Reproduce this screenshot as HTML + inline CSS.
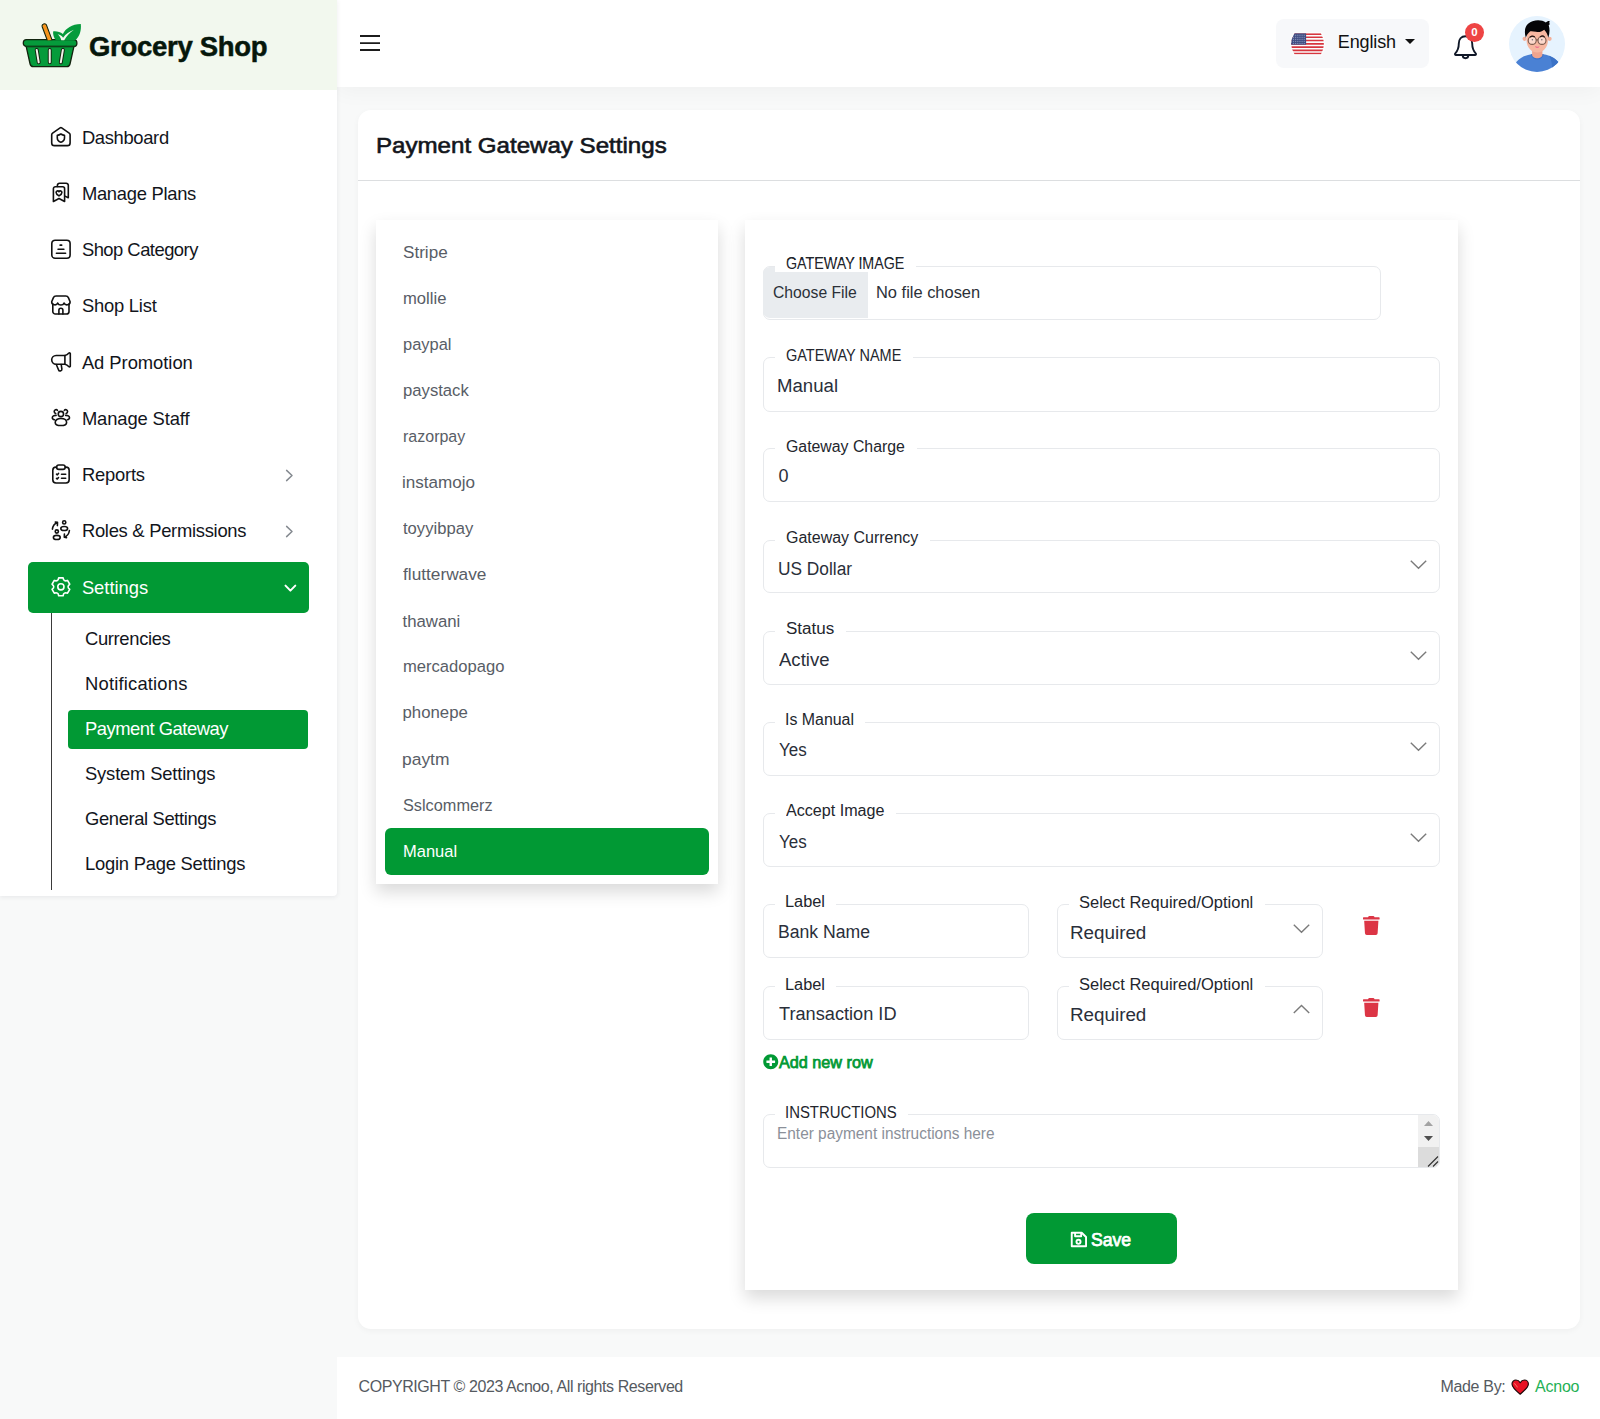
<!DOCTYPE html>
<html lang="en"><head><meta charset="utf-8"><title>Payment Gateway Settings</title>
<style>
*{box-sizing:border-box;margin:0;padding:0}
html,body{width:1600px;height:1419px;overflow:hidden}
body{position:relative;background:#f8f9f9;font-family:"Liberation Sans",sans-serif;color:#111}
.t{position:absolute;white-space:pre;font-family:"Liberation Sans",sans-serif}
.abs{position:absolute}
svg{position:absolute;overflow:visible}
.field{position:absolute;border:1px solid #e7e9ec;border-radius:7px;background:#fff}
.lbl{position:absolute;background:#fff;height:14px}
.shadow{box-shadow:0 8px 16px rgba(0,0,0,.15)}
</style></head><body>
<header class="abs" style="left:337px;top:0;width:1263px;height:87px;background:#fff;box-shadow:0 3px 22px rgba(0,0,0,.045)"></header>
<aside class="abs" style="left:0;top:0;width:337px;height:896px;background:#fff;box-shadow:0 1px 5px rgba(40,40,70,.09);border-radius:0 0 4px 0"></aside>
<div class="abs" style="left:0;top:0;width:337px;height:90px;background:#f2f8ee"></div>
<svg style="left:21px;top:21px" width="62" height="48" viewBox="0 0 62 48">
<defs><clipPath id="hc"><rect x="0" y="0" width="62" height="19.300"/></clipPath></defs>
<path d="M5.100 25.200 H53 L49 43 A3.300 3.300 0 0 1 45.800 45.600 H12.300 A3.300 3.300 0 0 1 9.100 43 Z" fill="#059b3b" stroke="#12240e" stroke-width="1.300" stroke-linejoin="round"/>
<rect x="2.300" y="18.600" width="53.600" height="6.900" rx="3.300" fill="#059b3b" stroke="#12240e" stroke-width="1.300"/>
<path d="M4.500 25.300 H53.600" stroke="#0a5a22" stroke-width="1.100" opacity=".75"/>
<g clip-path="url(#hc)"><path d="M21.200 5.700 L26.800 20.700 L31.100 19.100 L25.500 4.100 A2.300 2.300 0 0 0 21.200 5.700 Z" fill="#f7941d" stroke="#12240e" stroke-width="1.100" stroke-linejoin="round"/></g>
<path d="M34.800 19.300 C32.800 16.300 31.900 13.300 32.100 10.400 C35.600 10 39.200 10.900 41.900 13.100 C44.600 7.500 51 3.300 59.800 3.100 C60.500 9.600 58.600 15.700 54.300 19.300 Z" fill="#059b3b"/>
<path d="M36.700 13.300 C39.300 13.800 41 15 42.100 16.700 C44.800 13 48.300 10.400 52.900 8.800 C48.800 11.600 45.600 15 43.200 19.300 L40.300 19.300 C39.800 16.800 38.600 14.900 36.700 13.300 Z" fill="#f3f9ef"/>
<path d="M15.700 28.900 L17.700 41.300 M28.750 28.900 V41.300 M41.900 28.900 L39.800 41.300" stroke="#12240e" stroke-width="3.900" stroke-linecap="round"/>
<path d="M15.700 28.900 L17.700 41.300 M28.750 28.900 V41.300 M41.900 28.900 L39.800 41.300" stroke="#f4f1ea" stroke-width="2" stroke-linecap="round"/>
</svg>
<span class="t" style="left:88.95px;top:29px;font-size:27.5px;line-height:35px;color:#06170b;font-weight:700;letter-spacing:-0.287px;-webkit-text-stroke:0.5px #06170b;">Grocery Shop</span>
<svg style="left:49px;top:125px" width="24" height="24" viewBox="0 0 24 24" fill="none" stroke="#111" stroke-width="1.6" stroke-linecap="round" stroke-linejoin="round"><path d="M12.7 2.85 L20.2 8.1 A2.1 2.1 0 0 1 21.1 9.8 V17.9 A2.7 2.7 0 0 1 18.4 20.6 H5.4 A2.7 2.7 0 0 1 2.7 17.9 V9.8 A2.1 2.1 0 0 1 3.6 8.1 L11.1 2.85 A1.4 1.4 0 0 1 12.7 2.85 Z"/><path d="M11.9 9 C13.1 9.9 14.2 10.3 15.5 10.4 V12.9 C15.5 15.2 13.9 16.5 11.9 17.2 C9.9 16.5 8.3 15.2 8.3 12.9 V10.4 C9.6 10.3 10.7 9.9 11.9 9 Z"/></svg>
<span class="t" style="left:81.90px;top:125px;font-size:18.4px;line-height:25px;color:#12151c;letter-spacing:-0.343px;">Dashboard</span>
<svg style="left:49px;top:181px" width="24" height="24" viewBox="0 0 24 24" fill="none" stroke="#111" stroke-width="1.6" stroke-linecap="round" stroke-linejoin="round"><path d="M8.4 5.4 V4.3 A2.1 2.1 0 0 1 10.5 2.2 H17.2 A2.1 2.1 0 0 1 19.3 4.300 V16.8 L15.9 15.100"/><path d="M4.4 7.7 A2 2 0 0 1 6.4 5.7 H13.6 A2 2 0 0 1 15.600 7.700 V20.5 L10 17.5 L4.4 20.5 Z"/><path d="M10 14.900 C8.3 13.800 7.100 12.800 7.100 11.400 C7.100 9.800 9 9.300 10 10.700 C11 9.300 12.900 9.800 12.900 11.400 C12.900 12.800 11.700 13.800 10 14.900 Z"/></svg>
<span class="t" style="left:81.90px;top:181px;font-size:18.4px;line-height:25px;color:#12151c;letter-spacing:-0.289px;">Manage Plans</span>
<svg style="left:49px;top:237px" width="24" height="24" viewBox="0 0 24 24" fill="none" stroke="#111" stroke-width="1.6" stroke-linecap="round" stroke-linejoin="round"><rect x="2.800" y="3.200" width="18.300" height="18.050" rx="3.300"/><path d="M11.100 8.150 H12.700 M9.050 12.200 H14.900 M7.400 16.200 H16.600"/></svg>
<span class="t" style="left:81.90px;top:237px;font-size:18.4px;line-height:25px;color:#12151c;letter-spacing:-0.516px;">Shop Category</span>
<svg style="left:49px;top:293px" width="24" height="24" viewBox="0 0 24 24" fill="none" stroke="#111" stroke-width="1.6" stroke-linecap="round" stroke-linejoin="round"><path d="M3.800 11 V18.400 A2.600 2.600 0 0 0 6.400 21 H17.400 A2.600 2.600 0 0 0 20 18.400 V11"/><path d="M9.900 21 V17.300 A2 2 0 0 1 13.900 17.300 V21"/><path d="M2.700 8.800 L4.300 4.900 A3 3 0 0 1 7.100 3 H16.700 A3 3 0 0 1 19.500 4.900 L21.100 8.800 C21.300 12.300 16.100 12.900 15.100 10 C14.100 12.700 9.700 12.700 8.700 10 C7.700 12.900 2.500 12.300 2.700 8.800 Z"/></svg>
<span class="t" style="left:81.90px;top:293px;font-size:18.4px;line-height:25px;color:#12151c;letter-spacing:-0.221px;">Shop List</span>
<svg style="left:49px;top:350px" width="24" height="24" viewBox="0 0 24 24" fill="none" stroke="#111" stroke-width="1.6" stroke-linecap="round" stroke-linejoin="round"><path d="M15.900 5.450 H7.100 A4.400 4.400 0 0 0 7.100 14.250 H15.900 Z"/><path d="M15.900 5.450 C17.900 5.100 19 4.100 19.900 3 A0.850 0.850 0 0 1 21.300 3.600 V16.100 A0.850 0.850 0 0 1 19.900 16.700 C19 15.600 17.900 14.600 15.900 14.250"/><path d="M7.300 14.500 L9.500 19.700 A1.700 1.700 0 0 0 11.500 20.900 A1.700 1.700 0 0 0 12.900 19.100 L12.200 14.500"/></svg>
<span class="t" style="left:81.90px;top:350px;font-size:18.4px;line-height:25px;color:#12151c;letter-spacing:-0.045px;">Ad Promotion</span>
<svg style="left:49px;top:406px" width="24" height="24" viewBox="0 0 24 24" fill="none" stroke="#111" stroke-width="1.6" stroke-linecap="round" stroke-linejoin="round"><circle cx="11.900" cy="8" r="2.650"/><path d="M6.200 16.400 C6.200 13.800 8.700 12.500 11.900 12.500 C15.100 12.500 17.600 13.800 17.600 16.400 C17.600 18.700 15.700 19.500 11.900 19.500 C8.100 19.500 6.200 18.700 6.200 16.400 Z"/><path d="M8.500 4.400 C7.500 3 5.200 3.600 5.200 5.600 C5.200 6.500 5.800 7.200 6.700 7.500"/><path d="M15.300 4.400 C16.300 3 18.600 3.600 18.600 5.600 C18.600 6.500 18 7.200 17.100 7.500"/><path d="M7.100 9.400 C5.100 9.300 3.300 10.100 3.300 11.700 C3.300 12.800 4.200 13.500 5.500 13.700"/><path d="M16.700 9.400 C18.700 9.300 20.500 10.100 20.500 11.700 C20.500 12.800 19.600 13.500 18.300 13.700"/></svg>
<span class="t" style="left:81.90px;top:406px;font-size:18.4px;line-height:25px;color:#12151c;letter-spacing:-0.123px;">Manage Staff</span>
<svg style="left:49px;top:462px" width="24" height="24" viewBox="0 0 24 24" fill="none" stroke="#111" stroke-width="1.6" stroke-linecap="round" stroke-linejoin="round"><path d="M7.700 5.100 H7 A3.200 3.200 0 0 0 3.800 8.300 V17.800 A3.200 3.200 0 0 0 7 21 H16.950 A3.200 3.200 0 0 0 20.150 17.800 V8.300 A3.200 3.200 0 0 0 16.950 5.100 H16.200"/><rect x="7.600" y="3" width="8.600" height="4.400" rx="2.200"/><path d="M7.500 12.200 L8.300 12.800 L9.500 11.400 M7.500 16.400 L8.300 17 L9.500 15.600 M12.500 12.200 H16.700 M12.500 16.200 H16.700"/></svg>
<span class="t" style="left:81.90px;top:462px;font-size:18.4px;line-height:25px;color:#12151c;letter-spacing:-0.216px;">Reports</span>
<svg style="left:285px;top:469.0px" width="9" height="13" viewBox="0 0 9 13" fill="none" stroke="#858a90" stroke-width="1.5" stroke-linecap="round" stroke-linejoin="round"><path d="M1.6 1.4 L7 6.5 L1.6 11.6"/></svg>
<svg style="left:49px;top:518px" width="24" height="24" viewBox="0 0 24 24" fill="none" stroke="#111" stroke-width="1.6" stroke-linecap="round" stroke-linejoin="round"><circle cx="15.200" cy="4.400" r="1.600"/><ellipse cx="15.200" cy="10.500" rx="3.400" ry="2.050"/><circle cx="7.800" cy="13.500" r="1.600"/><ellipse cx="7.800" cy="19.400" rx="3.400" ry="2.050"/><path d="M3.400 11.200 C3.800 8 5.500 5.700 8.300 4.500 M6.300 4.100 L8.500 4.400 L8.400 7.600"/><path d="M20.400 12.500 C20 15.700 18.300 18 15.500 19.200 M17.500 19.600 L15.300 19.300 L15.400 16.100"/></svg>
<span class="t" style="left:81.90px;top:518px;font-size:18.4px;line-height:25px;color:#12151c;letter-spacing:-0.281px;">Roles &amp; Permissions</span>
<svg style="left:285px;top:525.0px" width="9" height="13" viewBox="0 0 9 13" fill="none" stroke="#858a90" stroke-width="1.5" stroke-linecap="round" stroke-linejoin="round"><path d="M1.6 1.4 L7 6.5 L1.6 11.6"/></svg>
<div class="abs" style="left:28px;top:562px;width:281px;height:51px;background:#019934;border-radius:5px"></div>
<svg style="left:49px;top:575px" width="24" height="24" viewBox="0 0 24 24" fill="none" stroke="#fff" stroke-width="1.6" stroke-linecap="round" stroke-linejoin="round"><circle cx="11.900" cy="11.800" r="3.100"/><path d="M9.18 4.70 L9.67 2.87 L14.13 2.87 L14.62 4.70 Q15.30 5.91 16.68 5.89 L18.52 5.41 L20.74 9.26 L19.41 10.61 Q18.70 11.80 19.41 12.99 L20.74 14.34 L18.52 18.19 L16.68 17.71 Q15.30 17.69 14.62 18.90 L14.13 20.73 L9.67 20.73 L9.18 18.90 Q8.50 17.69 7.12 17.71 L5.28 18.19 L3.06 14.34 L4.39 12.99 Q5.10 11.80 4.39 10.61 L3.06 9.26 L5.28 5.41 L7.12 5.89 Q8.50 5.91 9.18 4.70 Z"/></svg>
<span class="t" style="left:81.90px;top:575px;font-size:18.4px;line-height:25px;color:#fff;letter-spacing:-0.036px;">Settings</span>
<svg style="left:284px;top:584px" width="13" height="9" viewBox="0 0 13 9" fill="none" stroke="#fff" stroke-width="2" stroke-linecap="round" stroke-linejoin="round"><path d="M1.5 1.6 L6.4 6.6 L11.3 1.6"/></svg>
<div class="abs" style="left:51px;top:613px;width:1px;height:277px;background:#3a3a3a"></div>
<div class="abs" style="left:68px;top:710px;width:240px;height:39px;background:#019934;border-radius:4px"></div>
<span class="t" style="left:85.00px;top:626px;font-size:18.4px;line-height:25px;color:#12151c;letter-spacing:-0.347px;">Currencies</span>
<span class="t" style="left:85.00px;top:671px;font-size:18.4px;line-height:25px;color:#12151c;letter-spacing:0.185px;">Notifications</span>
<span class="t" style="left:85.00px;top:716px;font-size:18.4px;line-height:25px;color:#fff;letter-spacing:-0.490px;">Payment Gateway</span>
<span class="t" style="left:85.00px;top:761px;font-size:18.4px;line-height:25px;color:#12151c;letter-spacing:-0.177px;">System Settings</span>
<span class="t" style="left:85.00px;top:806px;font-size:18.4px;line-height:25px;color:#12151c;letter-spacing:-0.373px;">General Settings</span>
<span class="t" style="left:85.00px;top:851px;font-size:18.4px;line-height:25px;color:#12151c;letter-spacing:-0.235px;">Login Page Settings</span>
<svg style="left:360px;top:34px" width="20" height="18" viewBox="0 0 20 18" stroke="#1c1c1c" stroke-width="1.9"><path d="M0 2H20M0 9.100H20M0 16H20"/></svg>
<div class="abs" style="left:1276px;top:19px;width:153px;height:49px;background:#f7f8fa;border-radius:8px"></div>
<svg style="left:1290px;top:31.700px" width="35.500" height="23.800" viewBox="0 0 35.500 23.800">
<defs><clipPath id="fc"><path d="M4.600 1.200 H30.900 Q36.900 11.900 30.900 22.600 H4.600 Q-2.300 11.900 4.600 1.200 Z"/></clipPath></defs>
<path d="M3.600 0 H31.900 Q39 11.900 31.900 23.800 H3.600 Q-3.500 11.900 3.600 0 Z" fill="#fbfdfd"/>
<g clip-path="url(#fc)"><rect width="35.500" height="23.800" fill="#fbfdfd"/>
<path d="M0 2.10H36M0 5.25H36M0 8.50H36M0 11.80H36M0 15.10H36M0 18.30H36M0 21.50H36" stroke="#d7363f" stroke-width="1.700"/>
<rect x="0" y="1.200" width="16.100" height="11.500" fill="#3e4c82"/><rect x="2.90" y="2.70" width="1.200" height="1.200" fill="#7f8bb3"/><rect x="5.05" y="2.70" width="1.200" height="1.200" fill="#7f8bb3"/><rect x="7.20" y="2.70" width="1.200" height="1.200" fill="#7f8bb3"/><rect x="9.35" y="2.70" width="1.200" height="1.200" fill="#7f8bb3"/><rect x="11.50" y="2.70" width="1.200" height="1.200" fill="#7f8bb3"/><rect x="13.65" y="2.70" width="1.200" height="1.200" fill="#7f8bb3"/><rect x="2.90" y="4.75" width="1.200" height="1.200" fill="#7f8bb3"/><rect x="5.05" y="4.75" width="1.200" height="1.200" fill="#7f8bb3"/><rect x="7.20" y="4.75" width="1.200" height="1.200" fill="#7f8bb3"/><rect x="9.35" y="4.75" width="1.200" height="1.200" fill="#7f8bb3"/><rect x="11.50" y="4.75" width="1.200" height="1.200" fill="#7f8bb3"/><rect x="13.65" y="4.75" width="1.200" height="1.200" fill="#7f8bb3"/><rect x="2.90" y="6.80" width="1.200" height="1.200" fill="#7f8bb3"/><rect x="5.05" y="6.80" width="1.200" height="1.200" fill="#7f8bb3"/><rect x="7.20" y="6.80" width="1.200" height="1.200" fill="#7f8bb3"/><rect x="9.35" y="6.80" width="1.200" height="1.200" fill="#7f8bb3"/><rect x="11.50" y="6.80" width="1.200" height="1.200" fill="#7f8bb3"/><rect x="13.65" y="6.80" width="1.200" height="1.200" fill="#7f8bb3"/><rect x="2.90" y="8.85" width="1.200" height="1.200" fill="#7f8bb3"/><rect x="5.05" y="8.85" width="1.200" height="1.200" fill="#7f8bb3"/><rect x="7.20" y="8.85" width="1.200" height="1.200" fill="#7f8bb3"/><rect x="9.35" y="8.85" width="1.200" height="1.200" fill="#7f8bb3"/><rect x="11.50" y="8.85" width="1.200" height="1.200" fill="#7f8bb3"/><rect x="13.65" y="8.85" width="1.200" height="1.200" fill="#7f8bb3"/><rect x="2.90" y="10.90" width="1.200" height="1.200" fill="#7f8bb3"/><rect x="5.05" y="10.90" width="1.200" height="1.200" fill="#7f8bb3"/><rect x="7.20" y="10.90" width="1.200" height="1.200" fill="#7f8bb3"/><rect x="9.35" y="10.90" width="1.200" height="1.200" fill="#7f8bb3"/><rect x="11.50" y="10.90" width="1.200" height="1.200" fill="#7f8bb3"/><rect x="13.65" y="10.90" width="1.200" height="1.200" fill="#7f8bb3"/></g></svg>
<span class="t" style="left:1337.80px;top:30px;font-size:18px;line-height:24px;color:#111;letter-spacing:-0.138px;">English</span>
<svg style="left:1405px;top:39px" width="10" height="5" viewBox="0 0 10 5"><path d="M0 0H10L5 5Z" fill="#111"/></svg>
<svg style="left:1453px;top:34px" width="26" height="27" viewBox="0 0 26 27" fill="none" stroke="#101828" stroke-width="1.900" stroke-linecap="round" stroke-linejoin="round">
<path d="M12.500 2.300 C8.200 2.300 5.800 5.500 5.800 9.500 C5.800 13.500 5 16.500 2.300 19.300 C1.600 20 2 21 3 21 H22 C23 21 23.400 20 22.700 19.300 C20 16.500 19.200 13.500 19.200 9.500 C19.200 5.500 16.800 2.300 12.500 2.300 Z"/>
<path d="M9.700 21.300 C9.700 23 11 24.200 12.500 24.200 C14 24.200 15.300 23 15.300 21.300"/></svg>
<div class="abs" style="left:1465px;top:22.5px;width:19px;height:19px;border-radius:50%;background:#ee4444"></div>
<span class="t" style="left:1471.300px;top:24.500px;font-size:11.500px;line-height:14px;color:#fff;font-weight:700">0</span>
<svg style="left:1509px;top:16px" width="56" height="56" viewBox="0 0 56 56">
<defs><clipPath id="ac"><circle cx="28" cy="28" r="28"/></clipPath></defs>
<g clip-path="url(#ac)"><rect width="56" height="56" fill="#e6f3fe"/>
<path d="M3 56 C4 46.500 12 39.500 23.500 38 H33 C44.500 39.500 52.500 46.500 53.500 56 Z" fill="#4a81d4"/>
<path d="M40.200 39.800 C47.500 42.500 52.500 48 53.500 56 H43 C43.500 49 42.500 44 40.200 39.800 Z" fill="#3b72c6"/>
<path d="M21.800 38.300 C23.500 45.300 33 45.300 34.700 38.300 Z" fill="#3a70c8"/>
<path d="M23.100 31 H33.400 V38.600 C33.400 43.600 23.100 43.600 23.100 38.600 Z" fill="#f0a48e"/>
<circle cx="15.600" cy="22.800" r="2.100" fill="#f4b09a"/><circle cx="40.600" cy="22.800" r="2.100" fill="#f4b09a"/>
<path d="M17.600 14 H38.900 V25 C38.900 31.500 33.500 36.600 28.250 36.600 C23 36.600 17.600 31.500 17.600 25 Z" fill="#f7b7a0"/>
<path d="M16.800 21.800 C14.500 14 16.500 7.500 23.500 5.300 C28.500 3.600 33.500 4.300 36.800 6.500 C37.800 5.300 39.300 4.700 40.800 5 C40 6.300 40.300 7.300 40.900 8.300 C39.900 8.600 39.600 9 39.800 9.600 C41 13.500 40.600 17.800 39.300 21.800 C38.600 18.600 37.300 15.800 35.200 13.800 C32.500 16 29.500 16.500 27 15.800 C24.800 15.200 22.800 15 21.300 15.200 C19 17 17.600 19.300 16.800 21.800 Z" fill="#050507"/>
<circle cx="23.200" cy="24.400" r="4" fill="#fde3da" fill-opacity=".75" stroke="#7d5c4e" stroke-width="1.150"/><circle cx="33" cy="24.400" r="4" fill="#fde3da" fill-opacity=".75" stroke="#7d5c4e" stroke-width="1.150"/>
<path d="M27.100 23.900 H29.100" stroke="#7d5c4e" stroke-width="1.150"/>
<circle cx="23.400" cy="23.700" r=".750" fill="#6b6f78"/><circle cx="32.800" cy="23.700" r=".750" fill="#6b6f78"/>
<path d="M21.200 20.900 C22.500 19.900 24.200 19.900 25.400 20.700 M31.500 20.700 C32.700 19.900 34.400 19.900 35.300 20.900" stroke="#2a1a16" stroke-width="1.200" fill="none" stroke-linecap="round"/>
<path d="M26 30.300 C27.300 30.900 29.200 30.900 30.500 30.200 C30 32.300 26.700 32.400 26 30.300 Z" fill="#ee5c8c"/>
</g></svg>
<main class="abs" style="left:358px;top:110px;width:1222px;height:1219px;background:#fff;border-radius:13px;box-shadow:0 2px 6px rgba(0,0,0,.04)"></main>
<span class="t" style="left:376.00px;top:131px;font-size:22px;line-height:29px;color:#13161c;transform:scaleX(1.0955);transform-origin:0 0;-webkit-text-stroke:0.6px #13161c;">Payment Gateway Settings</span>
<div class="abs" style="left:358px;top:180px;width:1222px;height:1px;background:#dcdee0"></div>
<div class="abs shadow" style="left:376px;top:220px;width:342px;height:664px;background:#fff"></div>
<div class="abs" style="left:385px;top:828px;width:324px;height:47px;background:#019934;border-radius:6px"></div>
<span class="t" style="left:402.50px;top:241px;font-size:16.8px;line-height:23px;color:#585d66;transform:scaleX(1.0183);transform-origin:0 0;">Stripe</span>
<span class="t" style="left:402.51px;top:287px;font-size:16.8px;line-height:23px;color:#585d66;transform:scaleX(0.9907);transform-origin:0 0;">mollie</span>
<span class="t" style="left:402.52px;top:333px;font-size:16.8px;line-height:23px;color:#585d66;transform:scaleX(0.9807);transform-origin:0 0;">paypal</span>
<span class="t" style="left:402.51px;top:379px;font-size:16.8px;line-height:23px;color:#585d66;transform:scaleX(0.9934);transform-origin:0 0;">paystack</span>
<span class="t" style="left:402.55px;top:425px;font-size:16.8px;line-height:23px;color:#585d66;transform:scaleX(0.9538);transform-origin:0 0;">razorpay</span>
<span class="t" style="left:402.48px;top:471px;font-size:16.8px;line-height:23px;color:#585d66;transform:scaleX(1.0172);transform-origin:0 0;">instamojo</span>
<span class="t" style="left:402.50px;top:517px;font-size:16.8px;line-height:23px;color:#585d66;transform:scaleX(0.9902);transform-origin:0 0;">toyyibpay</span>
<span class="t" style="left:402.50px;top:563px;font-size:16.8px;line-height:23px;color:#585d66;transform:scaleX(1.0283);transform-origin:0 0;">flutterwave</span>
<span class="t" style="left:402.50px;top:610px;font-size:16.8px;line-height:23px;color:#585d66;">thawani</span>
<span class="t" style="left:402.51px;top:655px;font-size:16.8px;line-height:23px;color:#585d66;transform:scaleX(0.9883);transform-origin:0 0;">mercadopago</span>
<span class="t" style="left:402.50px;top:701px;font-size:16.8px;line-height:23px;color:#585d66;">phonepe</span>
<span class="t" style="left:402.46px;top:748px;font-size:16.8px;line-height:23px;color:#585d66;transform:scaleX(1.0385);transform-origin:0 0;">paytm</span>
<span class="t" style="left:402.50px;top:794px;font-size:16.8px;line-height:23px;color:#585d66;transform:scaleX(0.9705);transform-origin:0 0;">Sslcommerz</span>
<span class="t" style="left:402.52px;top:840px;font-size:16.8px;line-height:23px;color:#fff;transform:scaleX(0.9829);transform-origin:0 0;">Manual</span>
<div class="abs shadow" style="left:745px;top:220px;width:713px;height:1070px;background:#fff"></div>
<div class="field" style="left:763px;top:266px;width:618px;height:54px"></div>
<div class="lbl" style="left:775px;top:260px;width:140.5px"></div>
<span class="t" style="left:786.00px;top:253px;font-size:16px;line-height:21px;color:#23262d;transform:scaleX(0.8914);transform-origin:0 0;">GATEWAY IMAGE</span>
<div class="abs" style="left:763px;top:267px;width:104.5px;height:51px;background:#e9ecef;border-radius:7px 0 0 7px"></div>
<div class="lbl" style="left:775px;top:260px;width:141px;height:12.3px"></div>
<span class="t" style="left:786.00px;top:253px;font-size:16px;line-height:21px;color:#23262d;transform:scaleX(0.8914);transform-origin:0 0;">GATEWAY IMAGE</span>
<span class="t" style="left:773.40px;top:282px;font-size:16px;line-height:21px;color:#2b3038;transform:scaleX(0.9816);transform-origin:0 0;">Choose File</span>
<span class="t" style="left:875.57px;top:282px;font-size:16px;line-height:21px;color:#2b3038;transform:scaleX(1.0272);transform-origin:0 0;">No file chosen</span>
<div class="field" style="left:763px;top:357px;width:677px;height:55px"></div>
<div class="lbl" style="left:775px;top:351px;width:137.5px"></div>
<span class="t" style="left:786.00px;top:345px;font-size:16px;line-height:21px;color:#23262d;transform:scaleX(0.9052);transform-origin:0 0;">GATEWAY NAME</span>
<span class="t" style="left:777.47px;top:374px;font-size:18px;line-height:24px;color:#2a2f3a;transform:scaleX(1.0344);transform-origin:0 0;">Manual</span>
<div class="field" style="left:763px;top:448px;width:677px;height:54px"></div>
<div class="lbl" style="left:775px;top:442px;width:141.5px"></div>
<span class="t" style="left:786.00px;top:436px;font-size:16px;line-height:21px;color:#23262d;transform:scaleX(0.9903);transform-origin:0 0;">Gateway Charge</span>
<span class="t" style="left:778.50px;top:464px;font-size:18px;line-height:24px;color:#2a2f3a;">0</span>
<div class="field" style="left:763px;top:540px;width:677px;height:53px"></div>
<div class="lbl" style="left:775px;top:534px;width:154.8px"></div>
<span class="t" style="left:786.00px;top:527px;font-size:16px;line-height:21px;color:#23262d;transform:scaleX(0.9985);transform-origin:0 0;">Gateway Currency</span>
<span class="t" style="left:777.54px;top:557px;font-size:18px;line-height:24px;color:#2a2f3a;transform:scaleX(0.9615);transform-origin:0 0;">US Dollar</span>
<svg style="left:1410px;top:560px" width="17" height="10" viewBox="0 0 16.4 10" fill="none" stroke="#7b7b7b" stroke-width="1.4" stroke-linecap="square"><path d="M1 1.2 L8.2 8.2 L15.4 1.2"/></svg>
<div class="field" style="left:763px;top:631px;width:677px;height:54px"></div>
<div class="lbl" style="left:775px;top:625px;width:70.8px"></div>
<span class="t" style="left:786.00px;top:618px;font-size:16px;line-height:21px;color:#23262d;transform:scaleX(1.0648);transform-origin:0 0;">Status</span>
<span class="t" style="left:778.50px;top:648px;font-size:18px;line-height:24px;color:#2a2f3a;transform:scaleX(1.0305);transform-origin:0 0;">Active</span>
<svg style="left:1410px;top:651px" width="17" height="10" viewBox="0 0 16.4 10" fill="none" stroke="#7b7b7b" stroke-width="1.4" stroke-linecap="square"><path d="M1 1.2 L8.2 8.2 L15.4 1.2"/></svg>
<div class="field" style="left:763px;top:722px;width:677px;height:54px"></div>
<div class="lbl" style="left:775px;top:716px;width:89.9px"></div>
<span class="t" style="left:785.01px;top:709px;font-size:16px;line-height:21px;color:#23262d;transform:scaleX(0.9939);transform-origin:0 0;">Is Manual</span>
<span class="t" style="left:778.50px;top:738px;font-size:18px;line-height:24px;color:#2a2f3a;transform:scaleX(0.9433);transform-origin:0 0;">Yes</span>
<svg style="left:1410px;top:742px" width="17" height="10" viewBox="0 0 16.4 10" fill="none" stroke="#7b7b7b" stroke-width="1.4" stroke-linecap="square"><path d="M1 1.2 L8.2 8.2 L15.4 1.2"/></svg>
<div class="field" style="left:763px;top:813px;width:677px;height:54px"></div>
<div class="lbl" style="left:775px;top:807px;width:121.1px"></div>
<span class="t" style="left:786.00px;top:800px;font-size:16px;line-height:21px;color:#23262d;transform:scaleX(1.0068);transform-origin:0 0;">Accept Image</span>
<span class="t" style="left:778.50px;top:830px;font-size:18px;line-height:24px;color:#2a2f3a;transform:scaleX(0.9433);transform-origin:0 0;">Yes</span>
<svg style="left:1410px;top:833px" width="17" height="10" viewBox="0 0 16.4 10" fill="none" stroke="#7b7b7b" stroke-width="1.4" stroke-linecap="square"><path d="M1 1.2 L8.2 8.2 L15.4 1.2"/></svg>
<div class="field" style="left:763px;top:904px;width:266px;height:54px"></div>
<div class="lbl" style="left:775px;top:898px;width:60.9px"></div>
<span class="t" style="left:784.98px;top:891px;font-size:16px;line-height:21px;color:#23262d;transform:scaleX(1.0214);transform-origin:0 0;">Label</span>
<span class="t" style="left:777.52px;top:920px;font-size:18px;line-height:24px;color:#2a2f3a;transform:scaleX(0.9782);transform-origin:0 0;">Bank Name</span>
<div class="field" style="left:1057px;top:904px;width:266px;height:54px"></div>
<div class="lbl" style="left:1069px;top:898px;width:195.5px"></div>
<span class="t" style="left:1079.30px;top:892px;font-size:16px;line-height:21px;color:#23262d;transform:scaleX(1.0313);transform-origin:0 0;">Select Required/Optionl</span>
<span class="t" style="left:1069.76px;top:921px;font-size:18px;line-height:24px;color:#2a2f3a;transform:scaleX(1.0446);transform-origin:0 0;">Required</span>
<svg style="left:1293px;top:924px" width="17" height="10" viewBox="0 0 16.4 10" fill="none" stroke="#7b7b7b" stroke-width="1.4" stroke-linecap="square"><path d="M1 1.2 L8.2 8.2 L15.4 1.2"/></svg>
<svg style="left:1363px;top:916px" width="16.6" height="19" viewBox="0 0 448 512"><path fill="#dc3545" d="M432 32H312l-9.4-18.700A24 24 0 0 0 281.100 0H166.800a23.720 23.720 0 0 0-21.400 13.300L136 32H16A16 16 0 0 0 0 48v32a16 16 0 0 0 16 16h416a16 16 0 0 0 16-16V48a16 16 0 0 0-16-16zM53.200 467a48 48 0 0 0 47.900 45h245.800a48 48 0 0 0 47.900-45L416 128H32z"/></svg>
<div class="field" style="left:763px;top:986px;width:266px;height:54px"></div>
<div class="lbl" style="left:775px;top:980px;width:60.9px"></div>
<span class="t" style="left:784.98px;top:974px;font-size:16px;line-height:21px;color:#23262d;transform:scaleX(1.0214);transform-origin:0 0;">Label</span>
<span class="t" style="left:778.50px;top:1002px;font-size:18px;line-height:24px;color:#2a2f3a;transform:scaleX(1.0097);transform-origin:0 0;">Transaction ID</span>
<div class="field" style="left:1057px;top:986px;width:266px;height:54px"></div>
<div class="lbl" style="left:1069px;top:980px;width:195.5px"></div>
<span class="t" style="left:1079.30px;top:974px;font-size:16px;line-height:21px;color:#23262d;transform:scaleX(1.0313);transform-origin:0 0;">Select Required/Optionl</span>
<span class="t" style="left:1069.76px;top:1003px;font-size:18px;line-height:24px;color:#2a2f3a;transform:scaleX(1.0446);transform-origin:0 0;">Required</span>
<svg style="left:1293px;top:1004px" width="17" height="10" viewBox="0 0 16.4 10" fill="none" stroke="#7b7b7b" stroke-width="1.4" stroke-linecap="square"><path d="M1 8.6 L8.2 1.6 L15.4 8.6"/></svg>
<svg style="left:1363px;top:998px" width="16.6" height="19" viewBox="0 0 448 512"><path fill="#dc3545" d="M432 32H312l-9.4-18.700A24 24 0 0 0 281.100 0H166.800a23.720 23.720 0 0 0-21.400 13.300L136 32H16A16 16 0 0 0 0 48v32a16 16 0 0 0 16 16h416a16 16 0 0 0 16-16V48a16 16 0 0 0-16-16zM53.200 467a48 48 0 0 0 47.900 45h245.800a48 48 0 0 0 47.900-45L416 128H32z"/></svg>
<svg style="left:763.4px;top:1054.3px" width="15.5" height="15.5" viewBox="0 0 512 512"><path fill="#019934" d="M256 8C119 8 8 119 8 256s111 248 248 248 248-111 248-248S393 8 256 8zm144 276c0 6.600-5.400 12-12 12h-92v92c0 6.600-5.400 12-12 12h-56c-6.600 0-12-5.400-12-12v-92h-92c-6.600 0-12-5.400-12-12v-56c0-6.600 5.400-12 12-12h92v-92c0-6.600 5.400-12 12-12h56c6.600 0 12 5.400 12 12v92h92c6.600 0 12 5.400 12 12v56z"/></svg>
<span class="t" style="left:779.33px;top:1052px;font-size:16px;line-height:21px;color:#019934;transform:scaleX(1.0130);transform-origin:0 0;-webkit-text-stroke:0.75px #019934;">Add new row</span>
<div class="field" style="left:763px;top:1114px;width:677px;height:54px"></div>
<div class="lbl" style="left:775px;top:1108px;width:132.7px"></div>
<span class="t" style="left:785.07px;top:1102px;font-size:16px;line-height:21px;color:#23262d;transform:scaleX(0.9313);transform-origin:0 0;">INSTRUCTIONS</span>
<span class="t" style="left:777.04px;top:1123px;font-size:16px;line-height:21px;color:#8b9099;transform:scaleX(0.9631);transform-origin:0 0;">Enter payment instructions here</span>
<div class="abs" style="left:1418px;top:1115px;width:21px;height:32px;background:#f1f1f1;border-radius:0 6px 0 0"></div>
<div class="abs" style="left:1418px;top:1147px;width:21px;height:20px;background:#dcdcdc;border-radius:0 0 6px 0"></div>
<svg style="left:1424px;top:1120.5px" width="9" height="5" viewBox="0 0 9 5"><path d="M0 5H9L4.500 0Z" fill="#a3a3a3"/></svg>
<svg style="left:1424px;top:1136px" width="9" height="5" viewBox="0 0 9 5"><path d="M0 0H9L4.500 5Z" fill="#505050"/></svg>
<svg style="left:1427px;top:1155px" width="12" height="12" viewBox="0 0 12 12" stroke="#333" stroke-width="1.1" fill="none"><path d="M1 11.5 L11 1.500 M6 11.5 L11 6.500"/></svg>
<div class="abs" style="left:1026px;top:1213px;width:151px;height:51px;background:#019934;border-radius:8px"></div>
<svg style="left:1070px;top:1230.500px" width="17.500" height="16.500" viewBox="0 0 17.500 16.500" fill="none" stroke="#fff" stroke-width="1.900" stroke-linejoin="round">
<path d="M1.750 1.750 H11.700 L16.050 6 V15.250 H1.750 Z"/><path d="M5.100 2 V5.300 H11.200 V2"/><circle cx="8.500" cy="10.800" r="2.050"/></svg>
<span class="t" style="left:1090.92px;top:1228px;font-size:18px;line-height:24px;color:#fff;transform:scaleX(0.9789);transform-origin:0 0;-webkit-text-stroke:0.75px #fff;">Save</span>
<footer class="abs" style="left:337px;top:1357px;width:1263px;height:62px;background:#fff"></footer>
<span class="t" style="left:358.50px;top:1376px;font-size:16px;line-height:21px;color:#555a61;letter-spacing:-0.418px;">COPYRIGHT © 2023 Acnoo, All rights Reserved</span>
<span class="t" style="left:1440.50px;top:1376px;font-size:16px;line-height:21px;color:#555a61;letter-spacing:-0.334px;">Made By:</span>
<svg style="left:1510.700px;top:1378.800px" width="18.400" height="16.400" viewBox="0 0 19 17">
<path d="M9.500 15.800 C3 10.500 1 8 1 5.200 C1 2.700 2.900 1 5.100 1 C6.900 1 8.500 2 9.500 3.800 C10.500 2 12.100 1 13.900 1 C16.100 1 18 2.700 18 5.200 C18 8 16 10.500 9.500 15.800 Z" fill="#e81224" stroke="#1a0a0a" stroke-width="1.200" stroke-linejoin="round"/>
<path d="M3.800 4.800 C4.500 6.200 5.400 7.300 6.600 8.200" stroke="#f7806e" stroke-width="1" fill="none" stroke-linecap="round"/></svg>
<span class="t" style="left:1535.00px;top:1376px;font-size:16px;line-height:21px;color:#1fb155;letter-spacing:-0.217px;">Acnoo</span>
</body></html>
